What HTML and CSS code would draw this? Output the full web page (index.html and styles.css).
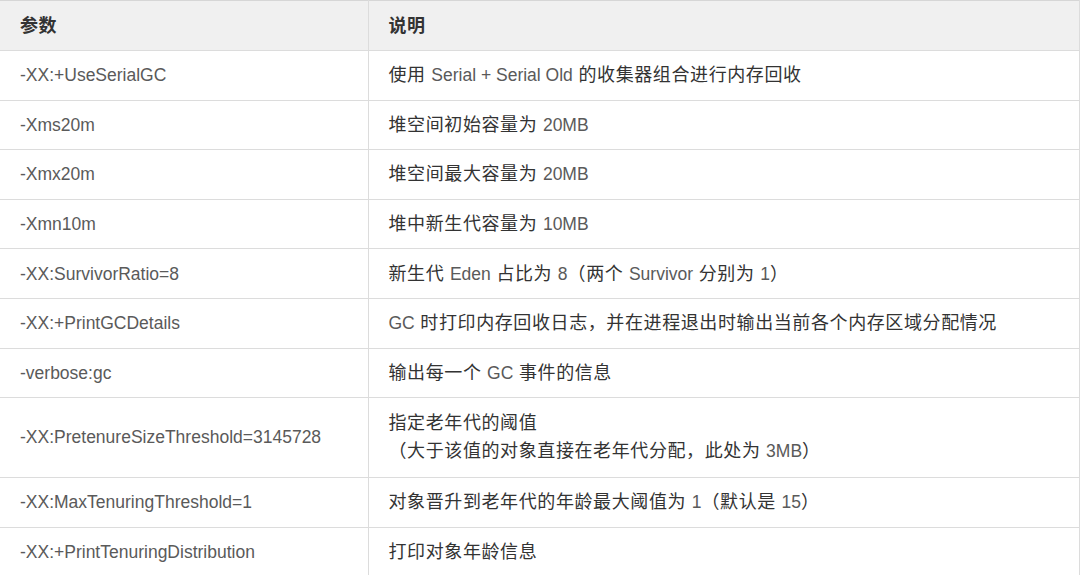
FILE: index.html
```html
<!DOCTYPE html>
<html lang="zh-CN">
<head>
<meta charset="utf-8">
<title>JVM 参数</title>
<link rel="stylesheet" href="styles.css">
</head>
<body>
<table class="params">
  <thead>
    <tr><th class="c1">参数</th><th class="c2">说明</th></tr>
  </thead>
  <tbody>
    <tr><td>-XX:+UseSerialGC</td><td>使用 <span class="en">Serial + Serial Old</span> 的收集器组合进行内存回收</td></tr>
    <tr><td>-Xms20m</td><td>堆空间初始容量为 <span class="en">20MB</span></td></tr>
    <tr><td>-Xmx20m</td><td>堆空间最大容量为 <span class="en">20MB</span></td></tr>
    <tr><td>-Xmn10m</td><td>堆中新生代容量为 <span class="en">10MB</span></td></tr>
    <tr><td>-XX:SurvivorRatio=8</td><td>新生代 <span class="en">Eden</span> 占比为 <span class="en">8</span>（两个 <span class="en">Survivor</span> 分别为 <span class="en">1</span>）</td></tr>
    <tr><td>-XX:+PrintGCDetails</td><td><span class="en">GC</span> 时打印内存回收日志，并在进程退出时输出当前各个内存区域分配情况</td></tr>
    <tr><td>-verbose:gc</td><td>输出每一个 <span class="en">GC</span> 事件的信息</td></tr>
    <tr class="tall"><td>-XX:PretenureSizeThreshold=3145728</td><td>指定老年代的阈值<br>（大于该值的对象直接在老年代分配，此处为 <span class="en">3MB</span>）</td></tr>
    <tr><td>-XX:MaxTenuringThreshold=1</td><td>对象晋升到老年代的年龄最大阈值为 <span class="en">1</span>（默认是 <span class="en">15</span>）</td></tr>
    <tr><td>-XX:+PrintTenuringDistribution</td><td>打印对象年龄信息</td></tr>
  </tbody>
</table>
</body>
</html>
```
FILE: styles.css
```css
html, body {
  margin: 0;
  padding: 0;
  background: #fff;
}
body {
  font-family: "Liberation Sans", "Noto Sans CJK SC", sans-serif;
  color: #333;
}
.params {
  width: 1080px;
  border-collapse: collapse;
  table-layout: fixed;
}
.params .c1 { width: 368px; }
.params th,
.params td {
  text-align: left;
  vertical-align: middle;
  padding: 0 20px;
  border: 1px solid #dcdcdc;
  line-height: 28px;
  height: 49.6px;
  box-sizing: border-box;
  font-size: 18px;
  letter-spacing: 0.6px;
  white-space: nowrap;
}
.params th:first-child,
.params td:first-child { border-left: none; }
.params thead th {
  background: #f0f0f0;
  color: #333;
  font-weight: bold;
  height: 50px;
  border-top: 1px solid #d6d6d6;
}
.params tbody td:first-child,
.params .en {
  color: #5a5a5a;
  font-size: 17.5px;
  letter-spacing: 0;
}
.params tr.tall td {
  height: 80px;
  padding-top: 10px;
  padding-bottom: 12px;
}
```
